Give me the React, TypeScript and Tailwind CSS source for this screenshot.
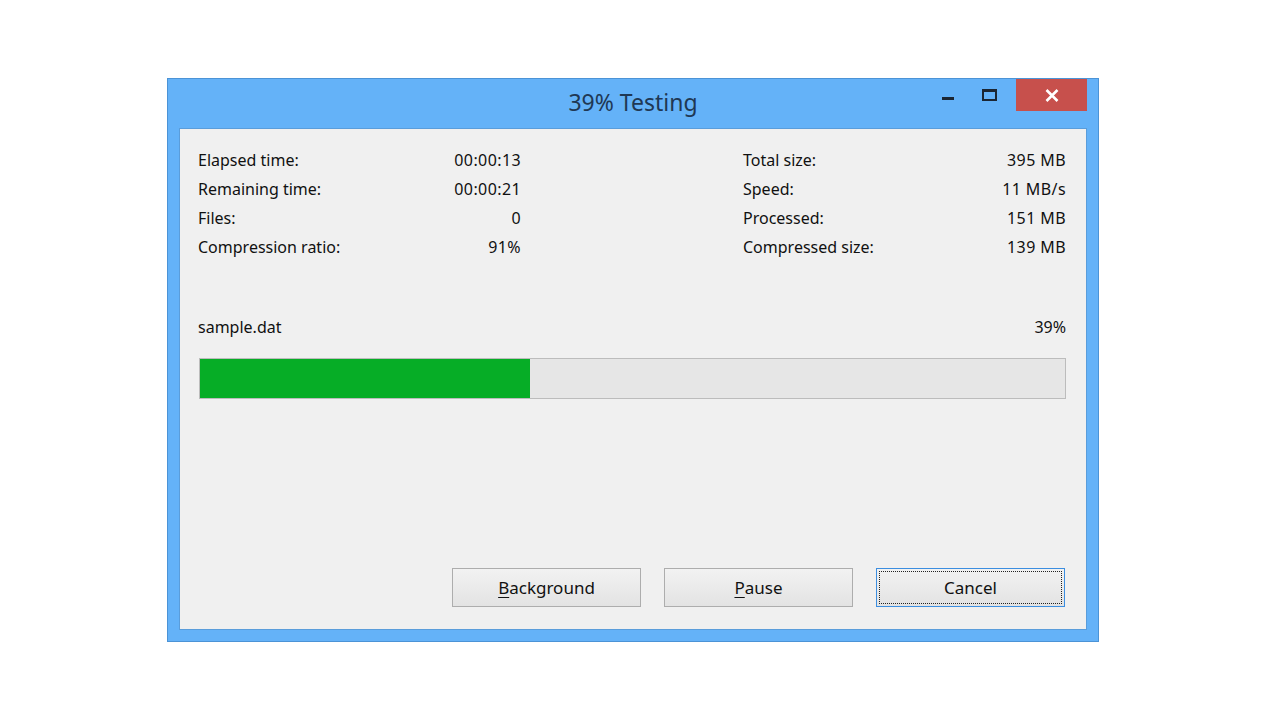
import React from 'react'

const font = { fontFamily: '"Noto Sans", "Open Sans", sans-serif' }

const leftRows = [
    ['Elapsed time:', '00:00:13'],
    ['Remaining time:', '00:00:21'],
    ['Files:', '0'],
    ['Compression ratio:', '91%'],
]

const rightRows = [
    ['Total size:', '395 MB'],
    ['Speed:', '11 MB/s'],
    ['Processed:', '151 MB'],
    ['Compressed size:', '139 MB'],
]

function InfoColumn({ rows }: { rows: string[][] }) {
    return (
        <div className="flex flex-col w-[323px]">
            {rows.map(([label, value]) => (
                <div key={label} className="flex justify-between items-center h-[29px]">
                    <span>{label}</span>
                    <span className="tracking-[0.4px]">{value}</span>
                </div>
            ))}
        </div>
    )
}

function Button({ label, hotkey, focused }: { label: string; hotkey?: boolean; focused?: boolean }) {
    const first = label.charAt(0)
    const rest = label.slice(1)
    return (
        <button
            className={
                'relative w-[189px] h-[39px] border bg-gradient-to-b from-[#f2f2f2] to-[#e3e3e3] text-[17px] text-[#111]' +
                (focused ? ' border-[#3c8ee0]' : ' border-[#adadad]')
            }
        >
            {focused && <span className="absolute inset-[2px] border border-dotted border-[#222]" />}
            {hotkey ? (
                <>
                    <span className="underline underline-offset-[3px]">{first}</span>
                    {rest}
                </>
            ) : (
                label
            )}
        </button>
    )
}

export default function App() {
    return (
        <div className="w-[1280px] h-[720px] bg-white pt-[78px] pl-[167px]" style={font}>
            <div className="w-[932px] h-[564px] border border-[#4b93d6] bg-[#64b2f8] flex flex-col">
                {/* title bar */}
                <div className="relative h-[49px] flex items-center justify-center">
                    <span className="text-[23px] text-[#1f3854] pb-[2px]">39% Testing</span>
                    <div className="absolute right-[11px] top-0 flex items-start">
                        <div className="w-[28px] h-[32px] flex items-center justify-center mr-[13px]">
                            <div className="w-[12px] h-[3px] bg-[#1b2633] mt-[7px]" />
                        </div>
                        <div className="w-[28px] h-[32px] flex items-start justify-center mr-[13px]">
                            <div className="w-[15px] h-[12px] border-2 border-t-[3px] border-[#1b2633] mt-[10px]" />
                        </div>
                        <div className="w-[71px] h-[32px] bg-[#c7504c] flex items-center justify-center">
                            <svg width="14" height="13" viewBox="0 0 14 13">
                                <path d="M1.5 1 L12.5 12 M12.5 1 L1.5 12" stroke="#fff" strokeWidth="2.6" />
                            </svg>
                        </div>
                    </div>
                </div>

                {/* client area */}
                <div className="flex-1 mx-[11px] mb-[11px] bg-[#f0f0f0] border border-[#5a9ddb] flex flex-col pl-[18px] pr-[20px] pt-[16px] pb-[22px] text-[16px] text-[#111]">
                    <div className="flex justify-between">
                        <InfoColumn rows={leftRows} />
                        <InfoColumn rows={rightRows} />
                    </div>

                    <div className="flex justify-between items-center h-[29px] mt-[51px]">
                        <span>sample.dat</span>
                        <span>39%</span>
                    </div>

                    <div className="mt-[17px] ml-[1px] h-[41px] border border-[#bcbcbc] bg-[#e6e6e6]">
                        <div className="h-full bg-[#06ad26]" style={{ width: '38.2%' }} />
                    </div>

                    <div className="mt-auto flex justify-end gap-[23px] pr-[1px]">
                        <Button label="Background" hotkey />
                        <Button label="Pause" hotkey />
                        <Button label="Cancel" focused />
                    </div>
                </div>
            </div>
        </div>
    )
}
